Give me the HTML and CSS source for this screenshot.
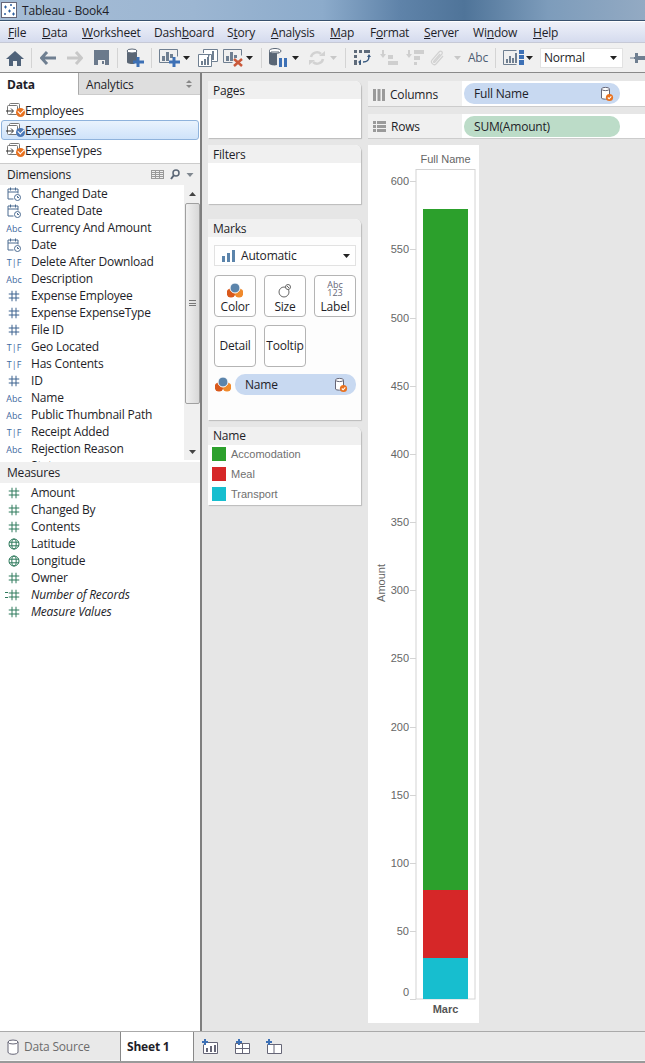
FILE: index.html
```html
<!DOCTYPE html>
<html lang="en">
  <head>
    <meta charset="UTF-8" />
    <title>Tableau - Book4</title>
    <link rel="stylesheet" href="styles.css">
  </head>
  <body>
    <svg class="hidden">
      <symbol id="hash" viewBox="0 0 11 11"><path d="M3.500 0v11M7.500 0v11M0 3.500h11M0 7.500h11" fill="none" stroke="currentColor" stroke-width="1"/></symbol>
      <symbol id="globe" viewBox="0 0 12 12"><g fill="none" stroke="currentColor"><circle cx="6" cy="6" r="5"/><ellipse cx="6" cy="6" rx="2.200" ry="5"/><path d="M1 4.200h10M1 7.800h10"/></g></symbol>
      <symbol id="cal" viewBox="0 0 15 15"><g fill="none" stroke="#4a6a90"><path d="M7 12.500H1.500V2.500h10V7M1.500 5.500h10M4 1v3M9 1v3"/><circle cx="11" cy="11" r="3" fill="#fff"/><path d="M11 9.500V11h1.500"/></g></symbol>
      <symbol id="src" viewBox="0 0 20 17"><g fill="#fff" stroke="#777"><rect x="3.500" y="1.500" width="10" height="8" rx="1"/><rect x="1.500" y="3.500" width="10" height="9" rx="1"/></g><path d="M0 9h7M5 6.500 7.500 9 5 11.500" fill="none" stroke="#333"/></symbol>
      <symbol id="cyl" viewBox="0 0 14 16"><path d="M1.500 3v9c0 1.500 8 1.500 8 0V3" fill="#fff" stroke="#667"/><ellipse cx="5.500" cy="3" rx="4" ry="1.600" fill="#fff" stroke="#667"/><circle cx="9.500" cy="11.500" r="3.600" fill="#e8711f"/><path d="M7.800 11.500l1.300 1.300 2.200-2.500" fill="none" stroke="#fff" stroke-width="1.100"/></symbol>
      <symbol id="trio" viewBox="0 0 16 15"><circle cx="4" cy="10" r="4.500" fill="#d9591c"/><circle cx="12" cy="10" r="4.500" fill="#f08a2c"/><circle cx="8" cy="5" r="5" fill="#5b84ab" stroke="#fff"/></symbol>
      <symbol id="down" viewBox="0 0 7 4"><path d="M0 0h7L3.500 4z" fill="currentColor"/></symbol>
      <symbol id="bars" viewBox="0 0 14 14"><path d="M1 13V7h3v6zM6 13V4h3v9zM11 13V1h3v12z" fill="currentColor"/></symbol>
    </svg>

    <div class="titlebar">
      <svg class="app-icon" width="16" height="16" viewBox="0 0 16 16"><rect x=".5" y=".5" width="15" height="15" fill="#fff" stroke="#667"/><path d="M3 5h3M4.500 3.500v3M9 3h2M10 2v2M7 9h3M8.500 7.500v3M12 6h2M13 5v2M3 12h2M4 11v2M11 12h3M12.500 10.500v3" stroke="#2c5fa0"/></svg>
      <span>Tableau - Book4</span>
    </div>

    <nav class="menubar">
      <span class="m-file"><u>F</u>ile</span>
      <span class="m-data"><u>D</u>ata</span>
      <span class="m-sheet"><u>W</u>orksheet</span>
      <span class="m-dash">Dash<u>b</u>oard</span>
      <span class="m-story">S<u>t</u>ory</span>
      <span class="m-analysis"><u>A</u>nalysis</span>
      <span class="m-map"><u>M</u>ap</span>
      <span class="m-format">F<u>o</u>rmat</span>
      <span class="m-server"><u>S</u>erver</span>
      <span class="m-window">Wi<u>n</u>dow</span>
      <span class="m-help"><u>H</u>elp</span>
    </nav>

    <div class="toolbar">
      <svg width="18" height="16" viewBox="0 0 18 16"><path d="M9 1 0 9h3v7h4v-5h4v5h4V9h3z" fill="#50637a"/></svg>
      <i class="sep"></i>
      <svg width="16" height="14" viewBox="0 0 16 14"><path d="M7 1 1.500 7 7 13M2 7h14" fill="none" stroke="#6f7f91" stroke-width="3"/></svg>
      <svg width="16" height="14" viewBox="0 0 16 14"><path d="M9 1l5.500 6L9 13M14 7H0" fill="none" stroke="#c8c8c8" stroke-width="3"/></svg>
      <svg width="15" height="15" viewBox="0 0 15 15"><path d="M0 0h15v15H0zM4 10v5h7v-5z" fill="#6b7a8c" fill-rule="evenodd"/><rect x="8" y="11" width="2" height="3" fill="#6b7a8c"/></svg>
      <i class="sep"></i>
      <svg width="18" height="19" viewBox="0 0 18 19"><path d="M1 3v11c0 2 5 2 7 2l3-3V3z" fill="#5a6675"/><ellipse cx="6" cy="3" rx="5" ry="2" fill="#fff" stroke="#5a6675"/><path d="M12 9v10M7 14h11" stroke="#3d70b5" stroke-width="3"/></svg>
      <i class="sep"></i>
      <svg class="nudge" width="21" height="18" viewBox="0 0 21 18"><path d="M.5.500h18v7M.5.500v13h10" fill="none" stroke="#6f7f91"/><path d="M3 12V7h3v5zM7 12V3h3v9zM11 12V5h3v4h-3z" fill="#6f7f91"/><path d="M15 8v10M10 13h11" stroke="#3d70b5" stroke-width="3"/></svg>
      <svg class="arrow dark" width="7" height="4"><use href="#down"/></svg>
      <svg width="20" height="18" viewBox="0 0 20 18"><path d="M5.500 4V.5h14v12H14M.5 5.500h13v12H.5z" fill="#fff" stroke="#6f7f91"/><path d="M3 16v-4h2v4zM6 16v-6h2v6zM9 16V8h2v8zM10 11V5h2M14 11V2h2v9z" fill="#6f7f91"/></svg>
      <svg width="20" height="18" viewBox="0 0 20 18"><path d="M.5.500h18v6M.5.500v13h9" fill="none" stroke="#6f7f91"/><path d="M3 12V7h3v5zM7 12V3h3v9zM11 12V6h3v3h-3z" fill="#6f7f91"/><path d="M11 10l8 7M19 10l-8 7" stroke="#c9583a" stroke-width="2.500"/></svg>
      <svg class="arrow dark" width="7" height="4"><use href="#down"/></svg>
      <i class="sep"></i>
      <svg width="18" height="19" viewBox="0 0 18 19"><path d="M0 3v12c0 2 5 3 8 2V3z" fill="#5a6675"/><ellipse cx="6" cy="3" rx="6" ry="2.500" fill="#fff" stroke="#5a6675"/><path d="M2 4h8" stroke="#5a6675"/><path d="M10 10h3v9h-3zM15 10h3v9h-3z" fill="#3d70b5"/></svg>
      <svg class="arrow dark" width="7" height="4"><use href="#down"/></svg>
      <svg class="nudge" width="16" height="16" viewBox="0 0 16 16"><path d="M2 7a6 6 0 0 1 10-3M14 9a6 6 0 0 1-10 3" fill="none" stroke="#d2d2d2" stroke-width="2.500"/><path d="M10 6h6V1zM6 10H0v5z" fill="#d2d2d2"/></svg>
      <svg class="arrow light" width="7" height="4"><use href="#down"/></svg>
      <i class="sep"></i>
      <svg width="17" height="16" viewBox="0 0 17 16"><path d="M0 0h3v3H0zM5 0h3v3H5zM10 0h6v3h-6zM0 5h3v3H0zM0 10h3v5H0zM5 13h2v2H5z" fill="#5f6b7a"/><path d="M15 6c0 5-2 6-6 6" fill="none" stroke="#38597f" stroke-width="1.500"/><path d="M7 9.500v5l-3-2.500zM13 7h4l-2-3z" fill="#38597f"/></svg>
      <svg width="18" height="15" viewBox="0 0 18 15"><path d="M8 5h5v4H8zM8 11h10v4H8zM2 0h2v4h2L3 8 0 4h2z" fill="#cfcfcf"/></svg>
      <svg width="18" height="15" viewBox="0 0 18 15"><path d="M8 0h10v4H8zM8 6h6v4H8zM8 12h3v3H8zM2 0h2v4h2L3 8 0 4h2z" fill="#cfcfcf"/></svg>
      <svg width="16" height="16" viewBox="0 0 16 16"><path d="M14 6 7 14c-2 2-6-1-4-4l7-8c2-2 4 0 3 2L6 12c-1 1-2 0-1-1l6-7" fill="none" stroke="#d2d2d2" stroke-width="1.200"/></svg>
      <svg class="arrow light" width="7" height="4"><use href="#down"/></svg>
      <span class="abc">Abc</span>
      <i class="sep"></i>
      <svg class="nudge" width="21" height="15" viewBox="0 0 21 15"><path d="M.5 14.500V.5h13M.5 14.500h13" fill="none" stroke="#6f7f91"/><path d="M3 13V9h2v4zM6 13V6h2v7zM9 13V8h2v5zM12 13V3h2v10z" fill="#6f7f91"/><path d="M16 0h5v4h-5zM16 5h5v4h-5zM16 10h5v5h-5z" fill="#3d70b5"/></svg>
      <svg class="arrow dark" width="7" height="4"><use href="#down"/></svg>
      <div class="fit-select"><span>Normal</span><svg class="dark" width="7" height="4"><use href="#down"/></svg></div>
      <svg class="pin" width="15" height="12" viewBox="0 0 15 12"><path d="M0 6h4M4 5h1V1h3v3h7v4H8v3H5V7H4z" fill="#6f7f91"/><path d="M0 6h5" stroke="#6f7f91"/></svg>
    </div>

    <main class="workspace">
      <aside class="side">
        <div class="tabs">
          <div class="tab tab-on">Data</div>
          <div class="tab tab-off">Analytics<span class="updown"></span></div>
        </div>
        <ul class="sources">
          <li><span class="src"><svg width="20" height="17"><use href="#src"/></svg><b class="check orange"></b></span>Employees</li>
          <li class="picked"><span class="src"><svg width="20" height="17"><use href="#src"/></svg><b class="check blue"></b></span>Expenses</li>
          <li><span class="src"><svg width="20" height="17"><use href="#src"/></svg><b class="check orange"></b></span>ExpenseTypes</li>
        </ul>
        <div class="side-head">
          Dimensions
          <span class="head-tools">
            <svg width="13" height="9" viewBox="0 0 13 9"><path d="M0 .5h13M0 2.500h13M0 4.500h13M0 6.500h13M0 8.500h13M.5 0v9M4.500 0v9M8.500 0v9M12.500 0v9" stroke="#999"/></svg>
            <svg width="10" height="11" viewBox="0 0 10 11"><circle cx="6" cy="4" r="3" fill="none" stroke="#5a6675" stroke-width="1.500"/><path d="M4 6 1 10" stroke="#5a6675" stroke-width="2"/></svg>
            <svg class="grey" width="8" height="4"><use href="#down"/></svg>
          </span>
        </div>
        <div class="dims">
          <ul class="fields">
            <li><svg width="15" height="15"><use href="#cal"/></svg>Changed Date</li>
            <li><svg width="15" height="15"><use href="#cal"/></svg>Created Date</li>
            <li><span class="tag">Abc</span>Currency And Amount</li>
            <li><svg width="15" height="15"><use href="#cal"/></svg>Date</li>
            <li><span class="tag">T|F</span>Delete After Download</li>
            <li><span class="tag">Abc</span>Description</li>
            <li><svg class="hash" width="11" height="11"><use href="#hash"/></svg>Expense Employee</li>
            <li><svg class="hash" width="11" height="11"><use href="#hash"/></svg>Expense ExpenseType</li>
            <li><svg class="hash" width="11" height="11"><use href="#hash"/></svg>File ID</li>
            <li><span class="tag">T|F</span>Geo Located</li>
            <li><span class="tag">T|F</span>Has Contents</li>
            <li><svg class="hash" width="11" height="11"><use href="#hash"/></svg>ID</li>
            <li><span class="tag">Abc</span>Name</li>
            <li><span class="tag">Abc</span>Public Thumbnail Path</li>
            <li><span class="tag">T|F</span>Receipt Added</li>
            <li><span class="tag">Abc</span>Rejection Reason</li>
            <li><span class="tag">Abc</span>Status</li>
          </ul>
          <div class="scroll">
            <svg class="scroll-up" width="7" height="4" viewBox="0 0 7 4"><path d="M0 4h7L3.500 0z" fill="#444"/></svg>
            <div class="thumb"><i></i></div>
            <svg width="7" height="4" viewBox="0 0 7 4"><path d="M0 0h7L3.500 4z" fill="#444"/></svg>
          </div>
        </div>
        <div class="side-head">Measures</div>
        <ul class="fields green">
          <li><svg class="hash" width="11" height="11"><use href="#hash"/></svg>Amount</li>
          <li><svg class="hash" width="11" height="11"><use href="#hash"/></svg>Changed By</li>
          <li><svg class="hash" width="11" height="11"><use href="#hash"/></svg>Contents</li>
          <li><svg class="hash" width="12" height="12"><use href="#globe"/></svg>Latitude</li>
          <li><svg class="hash" width="12" height="12"><use href="#globe"/></svg>Longitude</li>
          <li><svg class="hash" width="11" height="11"><use href="#hash"/></svg>Owner</li>
          <li class="calc"><svg class="hash" width="11" height="11"><use href="#hash"/></svg><em>Number of Records</em></li>
          <li><svg class="hash" width="11" height="11"><use href="#hash"/></svg><em>Measure Values</em></li>
        </ul>
      </aside>

      <section class="cards">
        <div class="card card-pages"><h4>Pages</h4></div>
        <div class="card card-filters"><h4>Filters</h4></div>
        <div class="card card-marks">
          <h4>Marks</h4>
          <div class="mark-type">
            <svg class="type-bars" width="14" height="14"><use href="#bars"/></svg>
            <span>Automatic</span>
            <svg class="dark" width="7" height="4"><use href="#down"/></svg>
          </div>
          <div class="mark-btns">
            <div class="mark-btn"><svg width="16" height="15"><use href="#trio"/></svg>Color</div>
            <div class="mark-btn"><svg width="14" height="15" viewBox="0 0 14 15"><g fill="none" stroke="#666"><circle cx="6" cy="9" r="5"/><circle cx="10" cy="4" r="2.500" fill="#fff"/><path d="M9 3l2 2"/></g></svg>Size</div>
            <div class="mark-btn"><span class="abc123">Abc<br>123</span>Label</div>
            <div class="mark-btn">Detail</div>
            <div class="mark-btn">Tooltip</div>
          </div>
          <div class="mark-pill">
            <svg width="16" height="15"><use href="#trio"/></svg>
            <div class="pill blue-pill">Name<svg width="14" height="16"><use href="#cyl"/></svg></div>
          </div>
        </div>
        <div class="card card-legend">
          <h4>Name</h4>
          <ul class="legend">
            <li><i class="sw-green"></i>Accomodation</li>
            <li><i class="sw-red"></i>Meal</li>
            <li><i class="sw-teal"></i>Transport</li>
          </ul>
        </div>
      </section>

      <section class="view">
        <div class="shelf shelf-cols">
          <div class="shelf-label">
            <svg width="12" height="12" viewBox="0 0 12 12"><path d="M0 0h3v12H0zM4.500 0h3v12h-3zM9 0h3v12H9z" fill="#9a9a9a"/></svg>
            Columns
          </div>
          <div class="pill blue-pill">Full Name<svg width="14" height="16"><use href="#cyl"/></svg></div>
        </div>
        <div class="shelf shelf-rows">
          <div class="shelf-label">
            <svg width="13" height="11" viewBox="0 0 13 11"><path d="M0 0h3v3H0zM4 0h9v3H4zM0 4h3v3H0zM4 4h9v3H4zM0 8h3v3H0zM4 8h9v3H4z" fill="#9a9a9a"/></svg>
            Rows
          </div>
          <div class="pill green-pill">SUM(Amount)</div>
        </div>
        <svg class="chart" width="111" height="878" viewBox="0 0 111 878">
          <text class="head" x="77.500" y="18" text-anchor="middle">Full Name</text>
          <rect x="48" y="24.500" width="59" height="829.500" fill="#fff" stroke="#d4d4d4"/>
          <rect x="55" y="64" width="45" height="681" fill="#2ca02c"/>
          <rect x="55" y="745" width="45" height="68" fill="#d62728"/>
          <rect x="55" y="813" width="45" height="41" fill="#17becf"/>
          <path d="M42 854.500h6M42 786.500h6M42 718.500h6M42 650.500h6M42 582.500h6M42 513.500h6M42 445.500h6M42 377.500h6M42 309.500h6M42 241.500h6M42 173.500h6M42 104.500h6M42 36.500h6" stroke="#d4d4d4"/>
          <g class="ticks" text-anchor="end">
            <text x="41" y="40">600</text>
            <text x="41" y="108">550</text>
            <text x="41" y="177">500</text>
            <text x="41" y="245">450</text>
            <text x="41" y="313">400</text>
            <text x="41" y="381">350</text>
            <text x="41" y="449">300</text>
            <text x="41" y="517">250</text>
            <text x="41" y="586">200</text>
            <text x="41" y="654">150</text>
            <text x="41" y="722">100</text>
            <text x="41" y="790">50</text>
            <text x="41" y="851">0</text>
          </g>
          <text class="head" transform="translate(17 438) rotate(-90)" text-anchor="middle">Amount</text>
          <text class="marc" x="77.500" y="868" text-anchor="middle">Marc</text>
        </svg>
      </section>
    </main>

    <footer class="tabbar">
      <div class="bottom-tab tab-source">
        <svg width="12" height="16" viewBox="0 0 12 16"><path d="M1 3v10c0 3 10 3 10 0V3" fill="#fff" stroke="#667"/><ellipse cx="6" cy="3" rx="5" ry="2" fill="#fff" stroke="#667"/></svg>
        Data Source
      </div>
      <div class="bottom-tab tab-sheet">Sheet 1</div>
      <div class="new-tabs">
        <svg width="16" height="15" viewBox="0 0 16 15"><path d="M1.500 5.500v9h14v-11H6" fill="#fff" stroke="#667"/><path d="M4 13V9h2v4zM8 13V7h2v6zM12 13V6h2v7z" fill="#667"/><path d="M3 0v6M0 3h6" stroke="#3d70b5" stroke-width="2"/></svg>
        <svg width="16" height="15" viewBox="0 0 16 15"><path d="M1.500 4.500h14v10h-14zM1.500 9.500h14M8.500 4.500v10" fill="#fff" stroke="#667"/><path d="M5 0v6M2 3h6" stroke="#3d70b5" stroke-width="2"/></svg>
        <svg width="16" height="15" viewBox="0 0 16 15"><path d="M1.500 5.500v9H8V5.500zM8 5.500h7.500v9H8" fill="#fff" stroke="#667"/><path d="M3 0v6M0 3h6" stroke="#3d70b5" stroke-width="2"/></svg>
      </div>
    </footer>
  </body>
</html>
```

FILE: styles.css
```css
* {
  box-sizing: border-box;
}

html,
body {
  height: 100%;
}

body {
  margin: 0;
  overflow: hidden;
  display: flex;
  flex-direction: column;
  background-color: #f5f5f5;
  color: #1e1e28;
  font-family: "Open Sans", "Liberation Sans", sans-serif;
  font-size: 12px;
  letter-spacing: -0.2px;
  line-height: 17px;
}

ul {
  list-style: none;
  margin: 0;
  padding: 0;
}

h4 {
  margin: 0;
  font-weight: 400;
  font-size: 12px;
}

.hidden {
  display: none;
}

.dark {
  color: #222;
}

.light {
  color: #c8c8c8;
}

.grey {
  color: #808890;
}

/* title + menu */

.titlebar {
  height: 21px;
  flex: none;
  display: flex;
  align-items: center;
  gap: 5px;
  padding: 0 1px;
  font-size: 12px;
  background: linear-gradient(90deg, #a6bdd6 0%, #9cb6d2 30%, #8cabcb 50%, #5f83a9 62%, #4f7499 72%, #7d9cbb 85%, #93aac3 100%);
  border-bottom: 1px solid #39526e;
}

.menubar {
  height: 21px;
  flex: none;
  position: relative;
  background: linear-gradient(#eef1f9, #d5dbee);
  border-top: 1px solid #fff;
}

.menubar span {
  position: absolute;
  top: 2px;
}

.m-file { left: 8px; }
.m-data { left: 42px; }
.m-sheet { left: 82px; }
.m-dash { left: 154px; }
.m-story { left: 227px; }
.m-analysis { left: 271px; }
.m-map { left: 330px; }
.m-format { left: 370px; }
.m-server { left: 424px; }
.m-window { left: 473px; }
.m-help { left: 533px; }

.toolbar {
  height: 31px;
  flex: none;
  display: grid;
  grid-template-columns: 26px 7px 26px 28px 24px 8px 28px 4px 28px 10px 33px 17px 16px 9px 23px 12px 28px 8px 17px 16px 38px 14px 30px 10px 32px 3px 28px 8px 97px 15px;
  align-items: center;
  justify-items: center;
  padding-left: 2px;
  background-color: #f0f0f0;
  border-top: 1px solid #c6c9d6;
  border-bottom: 1px solid #8a8a8a;
}

.toolbar .nudge {
  margin-left: 4px;
}

.sep {
  width: 1px;
  height: 20px;
  background-color: #d4d4d4;
}

.abc {
  color: #4e5d73;
  font-size: 12px;
}

.fit-select {
  width: 83px;
  height: 20px;
  justify-self: start;
  margin-left: 7px;
  padding: 0 5px 0 3px;
  display: flex;
  align-items: center;
  justify-content: space-between;
  background-color: #fff;
  border: 1px solid #e2e2e2;
}

/* main area */

.workspace {
  flex: 1;
  min-height: 0;
  display: flex;
  background-color: #e6e6e6;
}

.side {
  width: 202px;
  flex: none;
  background-color: #fff;
  border-right: 2px solid #7f7f7f;
}

.tabs {
  display: flex;
  height: 22px;
}

.tab {
  line-height: 24px;
}

.tab-on {
  width: 78px;
  padding-left: 7px;
  font-weight: 700;
}

.tab-off {
  flex: 1;
  position: relative;
  padding-left: 7px;
  background-color: #dedede;
  border-left: 1px solid #aaa;
  border-bottom: 1px solid #ccc;
}

.updown {
  position: absolute;
  right: 8px;
  top: 7px;
  width: 0;
  height: 0;
  border: 3px solid transparent;
  border-bottom-color: #888;
  border-top-width: 0;
}

.updown::after {
  content: "";
  position: absolute;
  left: -3px;
  top: 5px;
  border: 3px solid transparent;
  border-top-color: #888;
  border-bottom-width: 0;
}

.sources {
  height: 69px;
  padding-top: 5px;
  border-bottom: 1px solid #ccc;
}

.sources li {
  height: 20px;
  display: flex;
  align-items: center;
  margin: 0 1px;
  padding-left: 4px;
  border: 1px solid transparent;
}

.sources .picked {
  background: linear-gradient(#eaf3fd, #cfe3fa);
  border-color: #8fb3dc;
  border-radius: 3px;
}

.src {
  position: relative;
  width: 19px;
  height: 17px;
}

.check {
  position: absolute;
  right: 0;
  top: 6px;
  width: 9px;
  height: 9px;
  border-radius: 50%;
}

.check.orange {
  background-color: #e8711f;
}

.check.blue {
  background-color: #4a78b8;
}

.check::after {
  content: "";
  position: absolute;
  left: 2px;
  top: 1px;
  width: 5px;
  height: 3px;
  border-left: 1px solid #fff;
  border-bottom: 1px solid #fff;
  transform: rotate(-45deg);
}

.side-head {
  height: 21px;
  padding-left: 7px;
  display: flex;
  align-items: center;
  justify-content: space-between;
  background-color: #f0f0f0;
}

.head-tools {
  display: flex;
  align-items: center;
  gap: 6px;
  padding-right: 6px;
}

.dims {
  height: 277px;
  display: flex;
  overflow: hidden;
}

.fields {
  flex: 1;
  color: #39527a;
}

.fields.green {
  color: #2e7a5c;
  padding-top: 1px;
}

.fields li {
  height: 17px;
  display: flex;
  align-items: center;
  position: relative;
  padding-left: 31px;
  color: #1e1e28;
}

.fields li > svg,
.tag {
  position: absolute;
  left: 14px;
  top: 50%;
  transform: translate(-50%, -50%);
}

.hash {
  color: #3d628f;
}

.green .hash {
  color: #2e7a5c;
}

.tag {
  color: #3f6a9f;
  font-size: 9px;
  letter-spacing: 0;
  white-space: nowrap;
}

.calc::before {
  content: "";
  position: absolute;
  left: 5px;
  top: 6px;
  width: 3px;
  height: 4px;
  border-top: 1px solid #2e7a5c;
  border-bottom: 1px solid #2e7a5c;
}

.scroll {
  width: 16px;
  height: 275px;
  flex: none;
  display: flex;
  flex-direction: column;
  align-items: center;
  justify-content: space-between;
  background-color: #f0f0f0;
  padding: 7px 0 6px;
}

.thumb {
  width: 15px;
  height: 201px;
  margin-top: -2px;
  margin-bottom: 38px;
  display: flex;
  align-items: center;
  justify-content: center;
  background: linear-gradient(90deg, #f0f0f0, #d8d8d8);
  border: 1px solid #a0a0a0;
  border-radius: 2px;
}

.thumb i {
  width: 7px;
  height: 6px;
  border-top: 1px solid #777;
  border-bottom: 1px solid #777;
  background: linear-gradient(#777, #777) center / 100% 1px no-repeat;
}

/* middle cards */

.cards {
  width: 166px;
  flex: none;
  padding: 8px 0 0 6px;
}

.card {
  width: 153px;
  background-color: #fff;
  border-radius: 0 6px 0 0;
  box-shadow: 1px 1px 1px #bbb;
}

.card h4 {
  height: 18px;
  padding-left: 5px;
  line-height: 20px;
  background-color: #f0f0f0;
  border-radius: 0 6px 0 0;
}

.card-pages {
  height: 57px;
  margin-bottom: 7px;
}

.card-filters {
  height: 59px;
  margin-bottom: 15px;
}

.card-marks {
  height: 201px;
  margin-bottom: 7px;
  background-color: #fdfdfd;
}

.card-legend {
  height: 78px;
}

.card-legend h4 {
  line-height: 18px;
}

.mark-type {
  width: 142px;
  height: 21px;
  margin: 8px 0 9px 6px;
  display: flex;
  align-items: center;
  padding: 0 5px 0 6px;
  background-color: #fff;
  border: 1px solid #e2e2e2;
}

.mark-type span {
  flex: 1;
  padding-left: 6px;
}

.type-bars {
  color: #5b84ab;
}

.mark-btns {
  display: grid;
  grid-template-columns: repeat(3, 42px);
  gap: 8px;
  margin-left: 6px;
}

.mark-btn {
  height: 42px;
  display: flex;
  flex-direction: column;
  align-items: center;
  justify-content: flex-end;
  padding-bottom: 1px;
  background-color: #fff;
  border: 1px solid #b4b4b4;
  border-radius: 4px;
  white-space: nowrap;
}

.mark-btn:nth-child(n+4) {
  justify-content: center;
  padding-bottom: 1px;
}

.abc123 {
  color: #667;
  font-size: 9px;
  letter-spacing: 0;
  line-height: 8px;
  text-align: center;
  margin-bottom: 1px;
}

.mark-pill {
  display: flex;
  align-items: center;
  gap: 4px;
  margin: 7px 0 0 7px;
}

.pill {
  height: 21px;
  display: flex;
  align-items: center;
  justify-content: space-between;
  border-radius: 10px;
}

.mark-pill .pill {
  width: 121px;
  padding: 0 8px 0 10px;
}

.blue-pill {
  background-color: #c8d9f1;
}

.green-pill {
  background-color: #bcdcc8;
}

.legend {
  margin-top: -1px;
  padding-left: 4px;
}

.legend li {
  height: 20px;
  display: flex;
  align-items: center;
  gap: 5px;
  color: #707070;
  font-family: "Liberation Sans", sans-serif;
  font-size: 11px;
  letter-spacing: 0;
}

.legend i {
  width: 14px;
  height: 14px;
}

.sw-green { background-color: #2ca02c; }
.sw-red { background-color: #d62728; }
.sw-teal { background-color: #17becf; }

/* columns, rows, chart */

.view {
  flex: 1;
  min-width: 0;
  padding-top: 8px;
}

.shelf {
  display: flex;
  align-items: center;
  background-color: #fff;
  border-bottom: 1px solid #ccc;
}

.shelf-cols {
  height: 26px;
  margin-bottom: 7px;
}

.shelf-rows {
  height: 25px;
  margin-bottom: 6px;
}

.shelf-label {
  width: 94px;
  height: 100%;
  margin-right: 2px;
  padding: 2px 0 0 5px;
  display: flex;
  align-items: center;
  gap: 5px;
  background-color: #f0f0f0;
}

.shelf-rows .shelf-label {
  padding-top: 0;
}

.shelf .pill {
  width: 156px;
  padding: 0 6px 0 10px;
}

.chart {
  display: block;
  background-color: #fff;
}

.chart text {
  font-family: "Liberation Sans", sans-serif;
  font-size: 11px;
  letter-spacing: 0;
  fill: #666;
}

.chart .marc {
  font-weight: 700;
  fill: #555;
}

/* bottom tabs */

.tabbar {
  height: 32px;
  flex: none;
  display: flex;
  background-color: #e9e9e9;
  border-top: 1px solid #aaa;
  border-bottom: 2px solid #9a9a9a;
  box-shadow: inset 0 -1px 0 #f5f5f5;
}

.bottom-tab {
  display: flex;
  align-items: center;
}

.tab-source {
  width: 121px;
  gap: 5px;
  padding-left: 7px;
  color: #6c6c6c;
  border-right: 1px solid #888;
}

.tab-sheet {
  width: 73px;
  padding-left: 6px;
  font-weight: 700;
  background-color: #fff;
  border-right: 1px solid #888;
}

.new-tabs {
  display: flex;
  align-items: center;
  gap: 16px;
  padding-left: 8px;
}
```
